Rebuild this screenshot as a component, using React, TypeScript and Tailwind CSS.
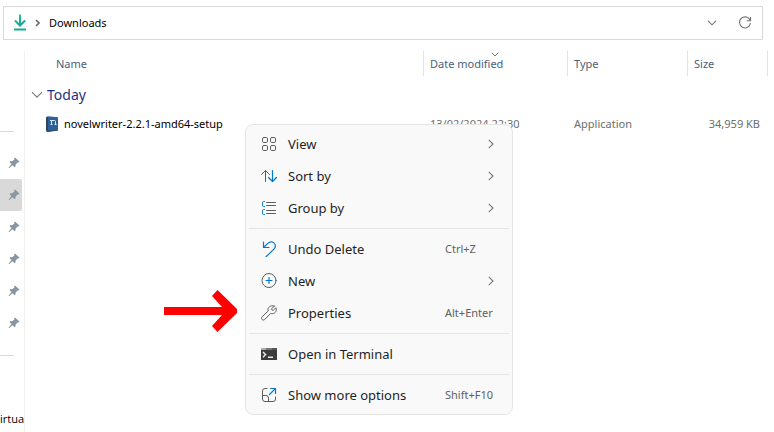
import type { ReactNode } from "react";

function Pin() {
  return (
    <svg viewBox="0 0 12 12" className="size-3" fill="#8a969f" aria-hidden="true">
      <path d="M7 .6 11.4 4.6 10.6 5.6 9.6 5.4 7.6 7.4 7.5 9.6 6.6 10.2 4.5 8.2 1.2 11.3 .6 10.8 3.4 7.1 1.6 5.2 2.2 4.2 4.6 4.1 6.5 2.3 6.2 1.3Z" />
    </svg>
  );
}

function Sidebar() {
  const pins = ["Desktop", "Downloads", "Documents", "Pictures", "Music", "Videos"];
  return (
    <nav aria-label="Quick access" className="w-[25px] shrink-0 border-r border-[#f0f0f0] pt-20">
      <hr className="mr-2.5 border-[#d9d9d9]" />
      <ul className="mt-[15px]">
        {pins.map((name) => (
          <li key={name}>
            <button
              aria-label={name}
              className={
                name === "Downloads"
                  ? "flex h-8 w-[22px] items-center rounded-r-xs bg-[#d9d9d9] pl-2"
                  : "flex h-8 w-[22px] items-center pl-2"
              }
            >
              <Pin />
            </button>
          </li>
        ))}
      </ul>
      <hr className="mt-4 mr-2.5 border-[#d9d9d9]" />
      <div className="mt-[55px] font-['Open_Sans',sans-serif] text-[11px] leading-4 whitespace-nowrap text-black">irtua</div>
    </nav>
  );
}

function AddressBar() {
  return (
    <div className="mt-1.5 mr-[11px] ml-[3px] flex h-[34px] items-center border border-[#d9d9d9] pr-2.5 pl-[9px] text-[11px] leading-4 text-black">
      <svg viewBox="0 0 14 18" className="h-[18px] w-3.5" aria-hidden="true">
        <defs>
          <linearGradient id="download" x1="0" y1="0" x2="1" y2="1">
            <stop offset="0" stopColor="#2cc98d" />
            <stop offset="1" stopColor="#1594a5" />
          </linearGradient>
        </defs>
        <path d="M6 .5h2v8.600l3.400-3.300 1.400 1.500L7 13.100 1.200 7.300l1.400-1.500L6 9.100Z" fill="url(#download)" />
        <path d="M1 14.500h12v2H1Z" fill="#16aa93" />
      </svg>
      <svg viewBox="0 0 6 8" className="ml-2 h-2 w-1.5" fill="none" stroke="#666" strokeWidth="1.6" aria-hidden="true">
        <path d="m1 1 3 3-3 3" />
      </svg>
      <span className="ml-2">Downloads</span>
      <button aria-label="Previous locations" className="ml-auto">
        <svg viewBox="0 0 10 6" className="h-1.5 w-2.5" fill="none" stroke="#777" strokeWidth="1.1">
          <path d="m1 .8 4 4 4-4" />
        </svg>
      </button>
      <button aria-label="Refresh" className="ml-[21px]">
        <svg viewBox="0 0 14 14" className="size-3.5" fill="none" stroke="#757575" strokeWidth="1.1">
          <path d="M12.200 4.500A5.500 5.500 0 1 0 12.500 7M12.500 1V4.700H8.800" />
        </svg>
      </button>
    </div>
  );
}

function FileList() {
  const head = "border-r border-[#e2e2e2] pl-1.5 text-left font-normal";
  return (
    <div className="min-w-0 flex-1 pr-1.5">
      <table className="w-full table-fixed border-separate border-spacing-0 text-[11px] leading-4 text-[#6d6d6d]">
        <colgroup>
          <col />
          <col className="w-36" />
          <col className="w-[120px]" />
          <col className="w-20" />
        </colgroup>
        <thead>
          <tr className="h-[25px] text-[#4c607a]">
            <th className="border-r border-[#e2e2e2] pl-[31px] text-left font-normal">Name</th>
            <th className={head}>
              <div className="relative">
                Date modified
                <svg viewBox="0 0 8 5" className="absolute -top-1 left-[61px] h-[5px] w-2" fill="none" stroke="#777" aria-hidden="true">
                  <path d="m.7.7 3.300 3.300L7.300.7" />
                </svg>
              </div>
            </th>
            <th className={head}>Type</th>
            <th className={head}>Size</th>
          </tr>
        </thead>
        <tbody>
          <tr className="h-[37px]">
            <td colSpan={4} className="pl-1.5">
              <button className="flex items-center gap-1 text-sm text-[#1e3287]">
                <svg viewBox="0 0 12 8" className="h-2 w-3" fill="none" stroke="#777" strokeWidth="1.1" aria-hidden="true">
                  <path d="m1 1.2 5 5 5-5" />
                </svg>
                Today
              </button>
            </td>
          </tr>
          <tr className="h-[22px]">
            <td className="pl-5 text-black">
              <div className="flex items-center gap-[5px]">
                <svg viewBox="0 0 14 16" className="h-4 w-3.5" aria-hidden="true">
                  <path d="M1 1.200 3 .3v14.500l-2 .6Z" fill="#32465a" />
                  <path d="m3 .3 10 1v13l-10 1.300Z" fill="#2c629c" />
                  <path d="m1 15.400 2-.6 10-1v.6L3 16Z" fill="#253f59" />
                  <path d="M5 4.500h1.500V9M6.500 4.500h3q1 0 1 1V9M5.500 8.500h2M9.500 8.500h2" fill="none" stroke="#dfeaf4" />
                </svg>
                novelwriter-2.2.1-amd64-setup
              </div>
            </td>
            <td className="pl-1.5">13/02/2024 22:30</td>
            <td className="pl-1.5">Application</td>
            <td className="pr-2 text-right">34,959 KB</td>
          </tr>
        </tbody>
      </table>
    </div>
  );
}

const BLUE = "#0078d4";

function Icon({ children }: { children: ReactNode }) {
  return (
    <svg viewBox="0 0 16 16" className="size-4" fill="none" stroke="#5c5c5c" strokeLinecap="round" strokeLinejoin="round" aria-hidden="true">
      {children}
    </svg>
  );
}

const icons = {
  view: (
    <Icon>
      <rect x="1.5" y="1.5" width="5" height="5" rx="1.3" />
      <rect x="9.5" y="1.5" width="5" height="5" rx="1.3" />
      <rect x="1.5" y="9.5" width="5" height="5" rx="1.3" />
      <rect x="9.5" y="9.5" width="5" height="5" rx="1.3" />
    </Icon>
  ),
  sort: (
    <Icon>
      <path d="M4.500 13.500v-11M.5 6.500l4-4 4 4" />
      <path d="M11.500 2.500v11M7.500 9.500l4 4 4-4" stroke={BLUE} strokeWidth="1.200" />
    </Icon>
  ),
  group: (
    <Icon>
      <path d="M3.500 1.500h-1q-1 0-1 1v3q0 1 1 1h1M3.500 9.500h-1q-1 0-1 1v3q0 1 1 1h1" stroke={BLUE} />
      <path d="M5.500 2.500h9M5.500 5.500h9M5.500 10.500h9M5.500 13.500h9" />
    </Icon>
  ),
  undo: (
    <Icon>
      <path d="M2.500 1v5.500H8M2.700 6.300 6.800 2.400C9 .3 12 .6 13.400 2.500c1.400 1.800 1.100 4.100-.5 5.700L5 15.800" stroke={BLUE} strokeWidth="1.200" />
    </Icon>
  ),
  add: (
    <Icon>
      <circle cx="8" cy="7.500" r="7" />
      <path d="M8 4.500v6M5 7.500h6" stroke={BLUE} strokeWidth="1.200" />
    </Icon>
  ),
  wrench: (
    <Icon>
      <path d="M13.300 1.100 10.600 3.800q-.3 1.200 1.600 1.600l2.700-2.700c1.100 2.700-.4 5.800-3.400 6-.8 0-1.300-.1-1.800-.3l-5.900 6c-1.900 1.800-4.400-.6-2.800-2.600L7.200 6C6 2.700 9.500-.4 13.300 1.100Z" />
    </Icon>
  ),
  terminal: (
    <svg viewBox="0 0 16 12" className="h-3 w-4" aria-hidden="true">
      <path d="M0 0h16v12H0Z" fill="#3b3b3b" />
      <path d="M0 0h5v2H0Z" fill="#ababab" />
      <path d="M5 0h6v2H5Z" fill="#777" />
      <path d="M11 0h5v2h-5Z" fill="#555" />
      <path d="m2 4 2.500 2.500L2 9.200M7 9.200h5" fill="none" stroke="#e8e8e8" strokeWidth="1.500" />
    </svg>
  ),
  more: (
    <Icon>
      <path d="M6 1.500H4q-2.500 0-2.500 2.500v8q0 2.500 2.500 2.500h8q2.500 0 2.500-2.500V10M1.500 8.500H5q2.500 0 2.500 2.500v3.500" />
      <path d="M9.500 1.500h5v5M14.300 1.700 8.500 7.500" stroke={BLUE} strokeWidth="1.200" />
    </Icon>
  ),
};

type Item = { label: string; icon: ReactNode; keys?: string; submenu?: boolean };

const groups: Item[][] = [
  [
    { label: "View", icon: icons.view, submenu: true },
    { label: "Sort by", icon: icons.sort, submenu: true },
    { label: "Group by", icon: icons.group, submenu: true },
  ],
  [
    { label: "Undo Delete", icon: icons.undo, keys: "Ctrl+Z" },
    { label: "New", icon: icons.add, submenu: true },
    { label: "Properties", icon: icons.wrench, keys: "Alt+Enter" },
  ],
  [{ label: "Open in Terminal", icon: icons.terminal }],
  [{ label: "Show more options", icon: icons.more, keys: "Shift+F10" }],
];

function ContextMenu() {
  return (
    <div role="menu" className="absolute top-[124px] left-[245px] w-[268px] rounded-lg border border-[#e5e5e5] bg-[#f9f9f9] p-[3px] text-[#1f1f1f]">
      {groups.map((group, i) => (
        <div key={i} role="group" className={i > 0 ? "mt-1 border-t border-[#e5e5e5] pt-1" : ""}>
          {group.map((item) => (
            <button key={item.label} role="menuitem" className="flex h-8 w-full items-center pl-3 text-left text-[13px] leading-5">
              <span className="flex w-[27px] shrink-0">{item.icon}</span>
              <span className="flex-1 whitespace-nowrap">{item.label}</span>
              {item.keys && <span className="w-16 text-[11px] whitespace-nowrap text-[#606060]">{item.keys}</span>}
              {item.submenu && (
                <svg viewBox="0 0 6 10" className="mr-[15px] h-2.5 w-1.5" fill="none" stroke="#777" strokeWidth="1.1" aria-hidden="true">
                  <path d="m.8.8 4.200 4.200L.8 9.200" />
                </svg>
              )}
            </button>
          ))}
        </div>
      ))}
    </div>
  );
}

export default function App() {
  return (
    <div className="relative flex h-screen flex-col overflow-hidden bg-white font-['Noto_Sans','Open_Sans',sans-serif]">
      <AddressBar />
      <main className="mt-[11px] flex min-h-0 flex-1">
        <Sidebar />
        <FileList />
      </main>
      <svg viewBox="0 0 74 42" className="absolute top-[290px] left-[164px] h-[42px] w-[74px]" fill="#f00" aria-hidden="true">
        <path d="M0 17h58L48 6 53.500 0 73 19v4L53.500 42 48 36 58 25H0Z" />
      </svg>
      <ContextMenu />
    </div>
  );
}
